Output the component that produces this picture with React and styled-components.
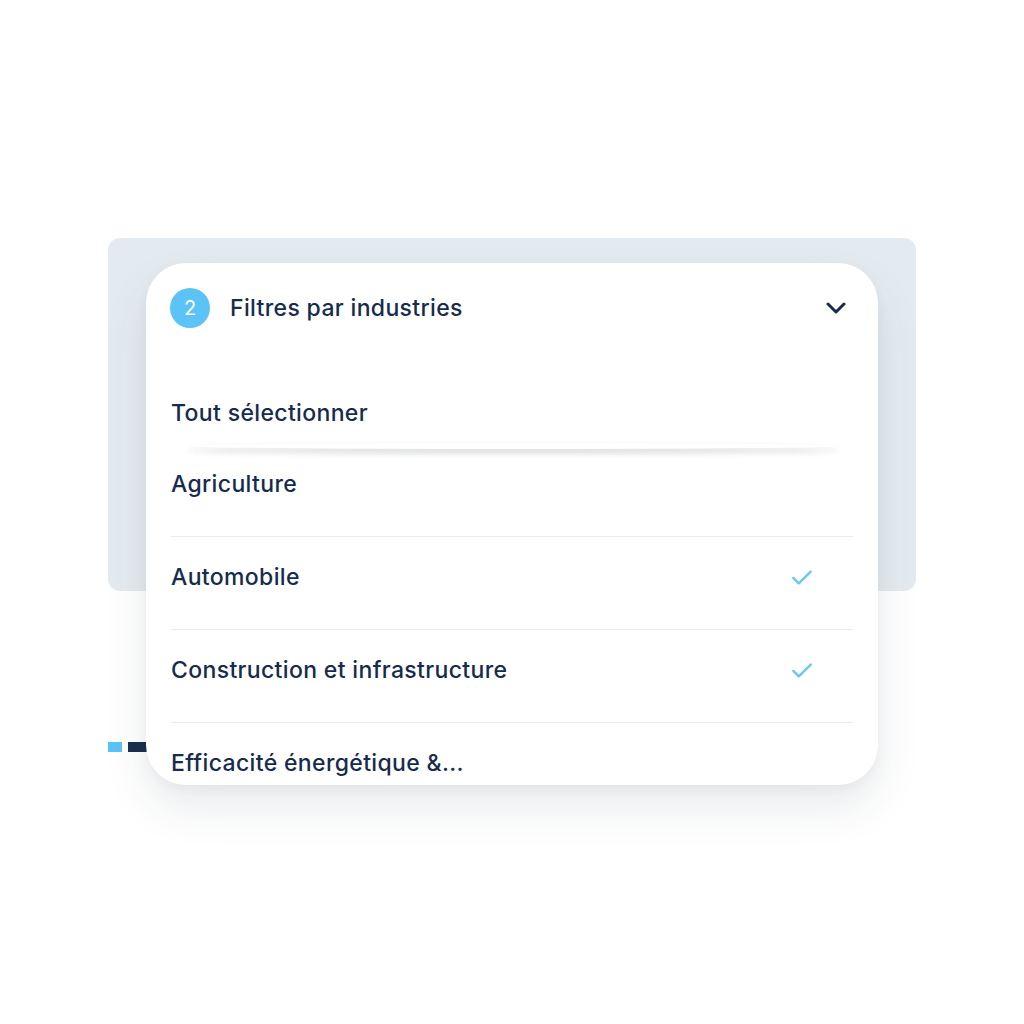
import React from "react"
import styled, { createGlobalStyle } from "styled-components"

const GlobalStyle = createGlobalStyle`
  html, body {
    margin: 0;
    padding: 0;
    background: #ffffff;
  }
  body {
    font-family: "Inter", "Open Sans", sans-serif;
    color: #172b4d;
  }
`

const industries = [
  { name: "Agriculture", checked: false },
  { name: "Automobile", checked: true },
  { name: "Construction et infrastructure", checked: true },
  { name: "Efficacité énergétique &...", checked: false },
]

export default function App() {
  return (
    <>
      <GlobalStyle />
      <Page>
        <Scene>
          <Backdrop />
          <Dashes>
            <Dash $color="#5cc3f7" $width={14} />
            <Dash $color="#1b2f4d" $width={24} />
          </Dashes>
          <Card>
            <Header>
              <Step>2</Step>
              <Title>Filtres par industries</Title>
              <Chevron viewBox="0 0 20 12" aria-hidden="true">
                <path d="M2 2l8 8 8-8" />
              </Chevron>
            </Header>
            <SelectAll>Tout sélectionner</SelectAll>
            <List>
              {industries.map((item, i) => (
                <Row key={item.name} $first={i === 0}>
                  <Label>{item.name}</Label>
                  {item.checked && (
                    <Check viewBox="0 0 24 18" aria-hidden="true">
                      <path d="M2.5 9.5l6 6L21.5 2.5" />
                    </Check>
                  )}
                </Row>
              ))}
            </List>
          </Card>
        </Scene>
      </Page>
    </>
  )
}

const Page = styled.main`
  width: 1024px;
  height: 1024px;
  padding: 238px 0 0 108px;
  box-sizing: border-box;
  overflow: hidden;
`

const Scene = styled.div`
  display: grid;
  width: 808px;
  grid-template-columns: 1fr;
  grid-template-rows: auto;

  & > * {
    grid-area: 1 / 1;
  }
`

const Backdrop = styled.div`
  height: 353px;
  background: #e4ebf0;
  border-radius: 12px;
`

const Dashes = styled.div`
  display: flex;
  gap: 6px;
  align-self: start;
  margin-top: 504px;
`

const Dash = styled.span`
  display: block;
  width: ${p => p.$width}px;
  height: 10px;
  background: ${p => p.$color};
`

const Card = styled.section`
  align-self: start;
  margin: 25px 0 0 38px;
  width: 732px;
  height: 522px;
  background: #ffffff;
  border-radius: 40px;
  box-shadow: 0 22px 44px rgba(30, 45, 70, 0.1), 0 4px 12px rgba(30, 45, 70, 0.04);
  overflow: hidden;
  display: flex;
  flex-direction: column;

  & > * {
    flex-shrink: 0;
  }
`

const Header = styled.header`
  display: flex;
  align-items: center;
  padding: 25px 32px 0 24px;
  height: 40px;
`

const Step = styled.span`
  width: 40px;
  height: 40px;
  border-radius: 50%;
  background: #5cc3f7;
  color: #ffffff;
  font-size: 20px;
  font-weight: 400;
  display: flex;
  align-items: center;
  justify-content: center;
  flex-shrink: 0;
`

const Title = styled.h1`
  flex: 1;
  margin: 0 0 0 20px;
  font-size: 23px;
  font-weight: 500;
  letter-spacing: 0.35px;
  line-height: 26px;
  color: #172b4d;
`

const Chevron = styled.svg`
  width: 20px;
  height: 12px;
  fill: none;
  stroke: #172b4d;
  stroke-width: 3;
  stroke-linecap: round;
  stroke-linejoin: round;
`

const SelectAll = styled.div`
  position: relative;
  margin-top: 45px;
  height: 76px;
  padding: 27px 25px 0;
  box-sizing: border-box;
  font-size: 23px;
  font-weight: 500;
  letter-spacing: 0.35px;
  line-height: 26px;

  &::after {
    content: "";
    position: absolute;
    left: 40px;
    right: 38px;
    bottom: 0;
    height: 6px;
    border-radius: 50%;
    box-shadow: 0 4px 6px rgba(20, 30, 50, 0.18);
  }
`

const List = styled.ul`
  list-style: none;
  margin: 0 25px;
  padding: 0;
`

const Row = styled.li`
  display: flex;
  align-items: center;
  padding: ${p => (p.$first ? "22px" : "27px")} 40px 39px 0;
  border-bottom: 1px solid #e6ecf1;
`

const Label = styled.span`
  flex: 1;
  font-size: 23px;
  font-weight: 500;
  letter-spacing: 0.35px;
  line-height: 26px;
  white-space: nowrap;
`

const Check = styled.svg`
  width: 22px;
  height: 17px;
  fill: none;
  stroke: #6cc6f4;
  stroke-width: 2.6;
  stroke-linecap: round;
  stroke-linejoin: round;
`
